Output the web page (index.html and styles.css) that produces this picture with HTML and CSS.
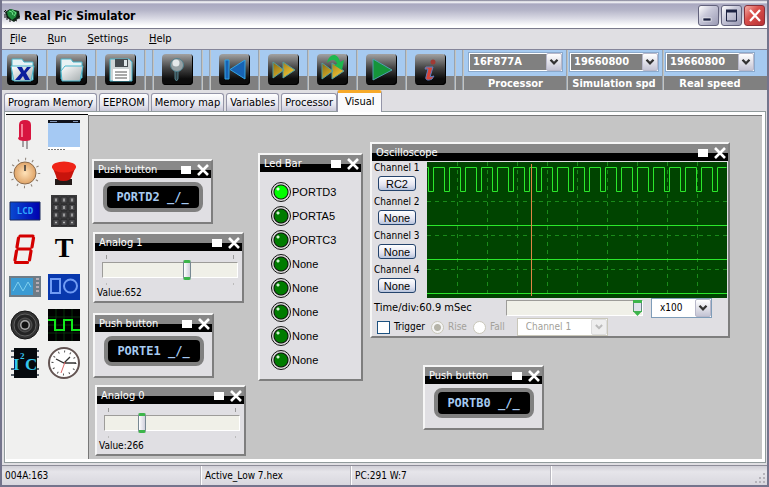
FILE: index.html
```html
<!DOCTYPE html>
<html lang="en">
<head>
    <meta charset="UTF-8">
    <meta name="viewport" content="width=device-width, initial-scale=1.0">
    <title>Real Pic Simulator</title>
    <link rel="stylesheet" href="styles.css">
</head>
<body>
    <!-- shared shapes -->
    <svg class="defs" width="0" height="0" aria-hidden="true">
        <defs>
            <linearGradient id="gold" x1="0" y1="0" x2="1" y2="1">
                <stop offset="0" stop-color="#8a6a10"/><stop offset="1" stop-color="#ffd23c"/>
            </linearGradient>
            <linearGradient id="paper" x1="0" y1="0" x2="1" y2="1">
                <stop offset="0" stop-color="#ffffff"/><stop offset="1" stop-color="#a4acae"/>
            </linearGradient>
            <linearGradient id="lcd"><stop offset="0" stop-color="#0a4ad0"/><stop offset="1" stop-color="#0000b0"/></linearGradient>
            <radialGradient id="knob"><stop offset="0" stop-color="#ffe2b8"/><stop offset="1" stop-color="#dfa468"/></radialGradient>
            <symbol id="chevron" viewBox="0 0 16 18">
                <path d="M4 6.500l4 4 4-4" fill="none" stroke="currentColor" stroke-width="2.600"/>
            </symbol>
            <symbol id="cross" viewBox="0 0 12 12">
                <path d="M1 1l10 10M11 1L1 11" stroke="#fff" stroke-width="2.600"/>
            </symbol>
        </defs>
    </svg>

    <header class="titlebar">
        <svg class="app-icon" width="17" height="17" viewBox="0 0 17 17">
            <path d="M1 5l5-3 9 2 1 6-6 5-7-4z" fill="#102818"/>
            <path d="M3 5l4-3 6 3-1 5-4 3-4-4z" fill="#1f8a3c"/>
            <path d="M5 4l3 1 1 3M8 3l4 3-2 3" stroke="#6fe08a" fill="none"/>
            <path d="M1 7v4M3 9v4M6 12v3M11 13l2 1M15 9v3M2 3L0 5" stroke="#111"/>
        </svg>
        <h1>Real Pic Simulator</h1>
        <div class="window-buttons">
            <button class="win-btn" aria-label="Minimize"><svg width="19" height="19" viewBox="0 0 19 19"><rect x="4" y="12" width="8" height="3" fill="#1c2242" stroke="#fff" stroke-width=".6"/></svg></button>
            <button class="win-btn" aria-label="Maximize"><svg width="19" height="19" viewBox="0 0 19 19"><path d="M4.500 5v10h10V5z" fill="none" stroke="#1c2242"/><path d="M4 5h11" stroke="#1c2242" stroke-width="3"/></svg></button>
            <button class="win-btn close" aria-label="Close"><svg width="19" height="19" viewBox="0 0 19 19"><path d="M5 4l10 11M15 4L5 15" stroke="#fff" stroke-width="2.200"/></svg></button>
        </div>
    </header>

    <nav class="menu">
        <a href="#"><u>F</u>ile</a>
        <a href="#"><u>R</u>un</a>
        <a href="#"><u>S</u>ettings</a>
        <a href="#"><u>H</u>elp</a>
    </nav>

    <div class="toolbar">
        <button class="tool" aria-label="Close project"><svg viewBox="0 0 31 31"><path d="M5 26V5h10l2 3h9v18z" fill="#e8f2f4" stroke="#49b6cc"/><path d="M4 12h23l-3 15H7z" fill="url(#paper)" stroke="#49b6cc"/><path d="M10 13h5l2 4 3-4h4l-5 6 4 7h-5l-2-4-3 4h-5l6-7z" fill="#0a1e9c"/></svg></button>
        <span class="sep"></span>
        <button class="tool" aria-label="Open"><svg viewBox="0 0 31 31"><path d="M5 25V5h10l2 3h9v16z" fill="#e8f2f4" stroke="#49b6cc"/><path d="M6 27l-1-10 4-5h18l-3 15z" fill="url(#paper)" stroke="#49b6cc"/></svg></button>
        <span class="sep"></span>
        <button class="tool" aria-label="Save"><svg viewBox="0 0 31 31"><path d="M5 5h19l3 3v19H5z" fill="#cfd5d6" stroke="#49b6cc"/><path d="M10 5h13v8H10z" fill="#464c50"/><path d="M19 6h3v6h-3z" fill="#dfe6e8"/><path d="M8 15h16v12H8z" fill="#fff"/><path d="M10 18h12M10 21h12M10 24h12" stroke="#555"/></svg></button>
        <span class="sep"></span>
        <span class="sep"></span>
        <button class="tool" aria-label="Find"><svg viewBox="0 0 31 31"><path d="M13 17h3v8l-1.500 2-1.500-2z" fill="#34464c" stroke="#5e98a4" stroke-width=".8"/><circle cx="15" cy="11" r="6.500" fill="#96a0a4" stroke="#50808c"/><circle cx="14" cy="9" r="3.500" fill="#e4e8ea"/></svg></button>
        <span class="sep"></span>
        <span class="sep"></span>
        <button class="tool" aria-label="Reset"><svg viewBox="0 0 31 31"><path d="M6 6h4v19H6zM26 6v19L11 15.500z" fill="#1763b4" stroke="#35a5e4"/></svg></button>
        <span class="sep"></span>
        <button class="tool" aria-label="Step"><svg viewBox="0 0 31 31"><path d="M5 8l11 8-11 8zM15 8l12 8-12 8z" fill="url(#gold)" stroke="#4f9ea0"/></svg></button>
        <span class="sep"></span>
        <button class="tool" aria-label="Step over"><svg viewBox="0 0 31 31"><path d="M5 9l11 8-11 8zM15 9l12 8-12 8z" fill="url(#gold)" stroke="#4f9ea0"/><path d="M10 9C12-1 21-2 23 8l4-2-2 10-8-5 3-1c-1-5-6-5-10-1z" fill="#1eb84e"/></svg></button>
        <span class="sep"></span>
        <button class="tool" aria-label="Run"><svg viewBox="0 0 31 31"><path d="M7 5l19 11L7 26z" fill="#15953a" stroke="#4fa0b0"/></svg></button>
        <span class="sep"></span>
        <button class="tool" aria-label="About"><svg viewBox="0 0 31 31"><circle cx="18" cy="8" r="2.500" fill="#a03a34"/><path d="M11 13h7l-3 10 4-1-2 3c-4 2-7 1-6-2l2-8h-3z" fill="#d84436" stroke="#5f7ec0"/></svg></button>
        <span class="sep"></span>
        <span class="sep"></span>
        <div class="field wide">
            <div class="combo dark">
                <select id="processor"><option>16F877A</option></select>
                <svg class="arrow"><use href="#chevron"/></svg>
            </div>
            <label for="processor">Processor</label>
        </div>
        <span class="sep"></span>
        <div class="field">
            <div class="combo dark">
                <select id="sim-speed"><option>19660800</option></select>
                <svg class="arrow"><use href="#chevron"/></svg>
            </div>
            <label for="sim-speed">Simulation spd</label>
        </div>
        <span class="sep"></span>
        <div class="field">
            <div class="combo dark">
                <select id="real-speed"><option>19660800</option></select>
                <svg class="arrow"><use href="#chevron"/></svg>
            </div>
            <label for="real-speed">Real speed</label>
        </div>
    </div>

    <div class="tabs" role="tablist">
        <button class="tab" role="tab">Program Memory</button>
        <button class="tab" role="tab">EEPROM</button>
        <button class="tab" role="tab">Memory map</button>
        <button class="tab" role="tab">Variables</button>
        <button class="tab" role="tab">Processor</button>
        <button class="tab active" role="tab" aria-selected="true">Visual</button>
    </div>

    <main class="page">
        <aside class="palette">
            <button aria-label="Led"><svg viewBox="0 0 32 32"><path d="M14 20v8M18 20v10" stroke="#8a8488" stroke-width="1.500"/><path d="M10 6q0-5 6-5t6 5v13q1 3-6 3t-7-3l1-1z" fill="#d8153f"/><path d="M13 5v13" stroke="#f47b92" stroke-width="2"/></svg></button>
            <button aria-label="Terminal"><svg viewBox="0 0 32 32"><path d="M0 1h32v30H0z" fill="#fff"/><path d="M0 4h32v24H0z" fill="#a5c9f3"/><path d="M0 1h32v3H0z" fill="#10131c"/><path d="M2 2.500h7M25 2.500h5" stroke="#8295b5"/><path d="M0 30.500h17" stroke="#777" stroke-dasharray="2 1"/></svg></button>
            <button aria-label="Potentiometer"><svg viewBox="0 0 32 32"><circle cx="16" cy="16" r="14" fill="none" stroke="#8a7f75" stroke-width="2.500" stroke-dasharray="1 6.300"/><circle cx="16" cy="16" r="11" fill="url(#knob)" stroke="#8a6a4c"/><path d="M16 8v6" stroke="#333" stroke-width="1.500"/></svg></button>
            <button aria-label="Push button"><svg viewBox="0 0 32 32"><path d="M7 22h17v6H7z" fill="#241a18"/><path d="M4 9h24l-4 10q-1 5-8.500 5T8 19z" fill="#c8140c"/><ellipse cx="16" cy="10" rx="12" ry="5.500" fill="#ef2417"/></svg></button>
            <button aria-label="LCD display"><svg viewBox="0 0 32 32"><path d="M1 7h30v18H1z" fill="url(#lcd)" stroke="#1a2a5c"/><text class="lcd-text" x="16" y="19" text-anchor="middle">LCD</text></svg></button>
            <button aria-label="Keypad"><svg viewBox="0 0 32 32"><path d="M3 0h26v32H3z" fill="#3a3a3c"/><path d="M5 2h6v6H5zM13 2h6v6h-6zM21 2h6v6h-6zM5 9.500h6v6H5zM13 9.500h6v6h-6zM21 9.500h6v6h-6zM5 17h6v6H5zM13 17h6v6h-6zM21 17h6v6h-6zM5 24.500h6v6H5zM13 24.500h6v6h-6zM21 24.500h6v6h-6z" fill="#4b4b4e" stroke="#252527" stroke-width=".7"/><path d="M8 3.500v3M16 3.500v3M24 3.500v3M8 11v3M16 11v3M24 11v3M8 18.500v3M16 18.500v3M24 18.500v3M7 27.500h2M15 27.500h2M23 27.500h2" stroke="#b5b5b5" stroke-width="1.500"/></svg></button>
            <button aria-label="7 segment"><svg viewBox="0 0 32 32"><path d="M11 3h13M24.500 5l-1.500 9M9.500 5L8 14M9 16h12M22 18l-1.500 9M7.500 18L6 27M6.500 29.500h12" fill="none" stroke="#d40000" stroke-width="3.200" stroke-linecap="round"/></svg></button>
            <button aria-label="Text"><svg viewBox="0 0 32 32"><text class="serif-text" x="16" y="24" text-anchor="middle">T</text></svg></button>
            <button aria-label="Oscilloscope"><svg viewBox="0 0 32 32"><path d="M0 5h32v21H0z" fill="#6f7c86"/><path d="M2 7h22v17H2z" fill="#3b9bd3"/><path d="M4 20l5-9 5 9 5-9 3 5" fill="none" stroke="#7fd0ee"/><path d="M27 8h3M27 12h3M27 16h3M27 20h3" stroke="#b7adb5" stroke-width="2"/></svg></button>
            <button aria-label="Graphic LCD"><svg viewBox="0 0 32 32"><path d="M0 3h32v26H0z" fill="#0838ad"/><path d="M3 8h9v14H3z" fill="none" stroke="#719cf4" stroke-width="2"/><circle cx="22.500" cy="15" r="6.500" fill="none" stroke="#719cf4" stroke-width="2"/></svg></button>
            <button aria-label="Speaker"><svg viewBox="0 0 32 32"><circle cx="16" cy="16" r="14" fill="#353535" stroke="#141414"/><circle cx="16" cy="16" r="11" fill="#242424" stroke="#606060"/><circle cx="16" cy="16" r="7" fill="#3a3a3a" stroke="#555"/><circle cx="16" cy="16" r="5" fill="#aaa"/><circle cx="16" cy="16" r="3.500" fill="#111"/></svg></button>
            <button aria-label="Signal"><svg viewBox="0 0 32 32"><path d="M0 0h32v32H0z" fill="#000"/><path d="M8 0v32M16 0v32M24 0v32M0 8h32M0 16h32M0 24h32" stroke="#0a4210" stroke-width=".7"/><path d="M0 11h7v10h9V11h8v10h8" fill="none" stroke="#12e81c" stroke-width="2"/></svg></button>
            <button aria-label="I2C"><svg viewBox="0 0 32 32"><path d="M2 4h28M2 10h28M2 22h28M2 28h28" stroke="#57606a" stroke-width="2"/><path d="M5 1h23v30H5z" fill="#060a0e"/><text class="chip-text" x="4" y="23">I</text><text class="chip-text small" x="11" y="12">2</text><text class="chip-text" x="16" y="23">C</text></svg></button>
            <button aria-label="Clock"><svg viewBox="0 0 32 32"><circle cx="16" cy="16" r="15" fill="#fff" stroke="#635452" stroke-width="2"/><circle cx="16" cy="16" r="11.500" fill="none" stroke="#555" stroke-width="2" stroke-dasharray="1 5"/><path d="M16 16l6-6M8 12l8 4h12" fill="none" stroke="#333" stroke-width="1.300"/><path d="M17 15l-4 11" stroke="#d66"/></svg></button>
        </aside>

        <section class="canvas">
            <div class="panel push push-d2">
                <div class="panel-title"><span>Push button</span><i class="box"></i><button aria-label="Close"><svg><use href="#cross"/></svg></button></div>
                <button class="pin">PORTD2 _/_</button>
            </div>

            <div class="panel analog analog-1">
                <div class="panel-title"><span>Analog 1</span><i class="box"></i><button aria-label="Close"><svg><use href="#cross"/></svg></button></div>
                <div class="slide"><input type="range" id="an1" min="0" max="1023" value="652"></div>
                <label for="an1">Value:652</label>
            </div>

            <div class="panel push push-e1">
                <div class="panel-title"><span>Push button</span><i class="box"></i><button aria-label="Close"><svg><use href="#cross"/></svg></button></div>
                <button class="pin">PORTE1 _/_</button>
            </div>

            <div class="panel analog analog-0">
                <div class="panel-title"><span>Analog 0</span><i class="box"></i><button aria-label="Close"><svg><use href="#cross"/></svg></button></div>
                <div class="slide"><input type="range" id="an0" min="0" max="1023" value="266"></div>
                <label for="an0">Value:266</label>
            </div>

            <div class="panel ledbar">
                <div class="panel-title"><span>Led Bar</span><i class="box"></i><button aria-label="Close"><svg><use href="#cross"/></svg></button></div>
                <ul>
                    <li><i class="led on"></i>PORTD3</li>
                    <li><i class="led"></i>PORTA5</li>
                    <li><i class="led"></i>PORTC3</li>
                    <li><i class="led"></i>None</li>
                    <li><i class="led"></i>None</li>
                    <li><i class="led"></i>None</li>
                    <li><i class="led"></i>None</li>
                    <li><i class="led"></i>None</li>
                </ul>
            </div>

            <div class="panel scope">
                <div class="panel-title"><span>Oscilloscope</span><i class="box"></i><button aria-label="Close"><svg><use href="#cross"/></svg></button></div>
                <div class="scope-main">
                    <div class="channels">
                        <div class="channel"><span>Channel 1</span><button>RC2</button></div>
                        <div class="channel"><span>Channel 2</span><button>None</button></div>
                        <div class="channel"><span>Channel 3</span><button>None</button></div>
                        <div class="channel"><span>Channel 4</span><button>None</button></div>
                    </div>
                    <svg class="plot" viewBox="0 0 300 136">
                        <path d="M0 0h300v136H0z" fill="#004400"/>
                        <g fill="none" stroke="#1a8a1a" stroke-dasharray="4 4">
                            <path d="M30.500 0v136M60.500 0v136M90.500 0v136M120.500 0v136M150.500 0v136M180.500 0v136M210.500 0v136M240.500 0v136M270.500 0v136"/>
                            <path d="M0 39.500h300M0 73.500h300M0 107.500h300"/>
                        </g>
                        <g fill="none" stroke="#2be82b">
                            <path d="M0 5.500h1.500v24h5v-24h11v24h5v-24h11v24h5v-24h11v24h5v-24h11v24h5v-24h11v24h5v-24h11v24h5v-24h7v24h5v-24h11v24h5v-24h11v24h5v-24h11v24h5v-24h11v24h5v-24h11v24h5v-24h11v24h5v-24h11v24h5v-24h11v24h5v-24h11v24h5v-24h11v24h5v-24h11v24h5v-24h9"/>
                            <path d="M0 63.500h300M0 97.500h300M0 131.500h300"/>
                        </g>
                        <path d="M104.500 2v132" stroke="#e08446"/>
                    </svg>
                </div>
                <div class="scope-row">
                    <label for="time-div">Time/div:60.9 mSec</label>
                    <input type="range" id="time-div" class="pointer" min="0" max="100" value="100">
                    <div class="combo scale">
                        <select aria-label="Scale"><option>x100</option></select>
                        <svg class="arrow"><use href="#chevron"/></svg>
                    </div>
                </div>
                <div class="scope-row trigger">
                    <input type="checkbox" id="trigger"><label for="trigger">Trigger</label>
                    <input type="radio" name="edge" id="rise" checked disabled><label class="off" for="rise">Rise</label>
                    <input type="radio" name="edge" id="fall" disabled><label class="off" for="fall">Fall</label>
                    <div class="combo source">
                        <select aria-label="Trigger channel" disabled><option>Channel 1</option></select>
                        <svg class="arrow"><use href="#chevron"/></svg>
                    </div>
                </div>
            </div>

            <div class="panel push push-b0">
                <div class="panel-title"><span>Push button</span><i class="box"></i><button aria-label="Close"><svg><use href="#cross"/></svg></button></div>
                <button class="pin">PORTB0 _/_</button>
            </div>
        </section>
    </main>

    <footer class="status">
        <span class="address">004A:163</span>
        <span class="file">Active_Low 7.hex</span>
        <span class="address">PC:291 W:7</span>
        <svg class="grip" width="12" height="12" viewBox="0 0 12 12"><path d="M9 1h2v2H9zM5 5h2v2H5zM9 5h2v2H9zM1 9h2v2H1zM5 9h2v2H5zM9 9h2v2H9z" fill="#b5b3ba"/></svg>
    </footer>
</body>
</html>
```
FILE: styles.css
```css
* {
    box-sizing: border-box;
}

body {
    display: flex;
    flex-direction: column;
    min-height: 100vh;
    margin: 0;
    border: solid #74748c;
    border-width: 0 2px 2px;
    font-family: "DejaVu Sans Condensed", "DejaVu Sans", sans-serif;
    font-size: 10px;
    line-height: 12px;
    color: #000;
    background-color: #e0dfe3;
}

button, input, select {
    font: inherit;
    color: inherit;
    margin: 0;
    padding: 0;
}

svg {
    display: block;
}

.defs {
    position: absolute;
}

/* title bar */
.titlebar {
    display: flex;
    align-items: center;
    height: 29px;
    padding: 3px 2px 0;
    border-bottom: 1px solid #7b7a8c;
    background: linear-gradient(#74748c 0, #fff 2px, #a9a8c0 4px, #b4b4c8 10px, #dcdce6 19px, #fff 26px);
}

.titlebar h1 {
    flex: 1;
    margin: 0 0 0 3px;
    font-size: 12px;
    line-height: 16px;
}

.window-buttons {
    display: flex;
    gap: 2px;
}

.win-btn {
    width: 21px;
    height: 21px;
    border: 1px solid #62627c;
    border-radius: 3px;
    background: linear-gradient(135deg, #fff, #c9c9da 40%, #9a9ab4);
}

.win-btn.close {
    border-color: #8a3038;
    background: linear-gradient(135deg, #f4b0a8, #d9504c 40%, #b83034);
}

/* menu */
.menu {
    display: flex;
    gap: 21px;
    height: 21px;
    padding: 4px 8px;
    border-bottom: 1px solid #85859a;
    font-size: 11px;
}

.menu a {
    color: #000;
    text-decoration: none;
}

/* toolbar */
.toolbar {
    display: flex;
    height: 40px;
    padding-left: 5px;
    border-left: 1px solid #8c8ca0;
    margin-left: -1px;
    background: linear-gradient(#a6caf0 26px, #808080 26px);
}

.tool {
    width: 31px;
    height: 31px;
    margin: 4px 8px 0;
    border: 0;
    border-radius: 4px;
    background: linear-gradient(#a2a2a2, #444 45%, #0c0c0c 80%);
    box-shadow: inset -1px -1px 0 #000;
}

.tool:first-child {
    margin-left: 0;
}

.sep {
    width: 2px;
    background-color: #c4c4c0;
    border-left: 1px solid #98a4b0;
}

.sep + .sep {
    margin-left: 6px;
}

.field {
    width: 90px;
    margin: 2px 3px 0 1px;
    text-align: center;
    font-size: 11px;
    font-weight: bold;
    color: #fff;
}

.field.wide {
    width: 95px;
    margin-left: 4px;
}

.field label {
    display: block;
    margin-top: 6px;
    white-space: nowrap;
}

.combo {
    position: relative;
    height: 20px;
    border: 1px solid #7f9db9;
    background-color: #fff;
}

.combo select {
    appearance: none;
    display: block;
    width: 100%;
    height: 100%;
    border: 0;
    padding: 0 17px 0 8px;
    background: transparent;
    opacity: 1;
}

.combo .arrow {
    position: absolute;
    right: 0;
    top: 0;
    width: 16px;
    height: 100%;
    color: #333;
    border: 1px solid #b8b8ca;
    border-radius: 2px;
    background: linear-gradient(#fff, #c4c4d4);
    pointer-events: none;
}

.combo.dark {
    border-color: #8aa9cc;
    background-color: #808080;
}

.combo.dark select {
    padding-left: 3px;
    border: 1px solid #fff;
}

/* tabs */
.tabs {
    display: flex;
    align-items: flex-end;
    gap: 2px;
    height: 21px;
    padding: 0 2px;
}

.tab {
    height: 18px;
    padding: 0 3px;
    border: 1px solid #9495a8;
    border-bottom: 0;
    border-radius: 3px 3px 0 0;
    font-size: 11px;
    background: linear-gradient(#fff, #e8e8f0 60%, #c8c8d8);
}

.tab.active {
    height: 22px;
    margin: 0 0 -1px -2px;
    padding: 0 7px 1px;
    border-top: 3px solid #f7a928;
    background: #fbfbfc;
    z-index: 1;
}

/* page */
.page {
    flex: 1;
    display: flex;
    margin: 0 1px 2px 2px;
    padding: 2px 3px 3px 1px;
    border: 1px solid #919b9c;
    background-color: #fff;
}

.palette {
    display: grid;
    grid-template-columns: 32px 32px;
    align-content: start;
    gap: 6px 7px;
    width: 82px;
    padding: 4px 3px;
    border-top: 1px solid #000;
    background-color: #f0f0ef;
}

.palette button {
    width: 32px;
    height: 32px;
    border: 0;
    background: none;
}

.lcd-text {
    font: bold 9px "DejaVu Sans Mono", monospace;
    fill: #31a8ff;
}

.serif-text {
    font: bold 28px "Liberation Serif", serif;
}

.chip-text {
    font: bold 17px "Liberation Serif", serif;
    fill: #35c6ee;
}

.chip-text.small {
    font-size: 9px;
}

.canvas {
    position: relative;
    flex: 1;
    margin-top: 1px;
    border: solid #777;
    border-width: 1px 0 0 1px;
    background-color: #c5c5c5;
}

/* component windows */
.panel {
    position: absolute;
    border: 2px solid #f6f6f6;
    border-right-color: #7e7e7e;
    border-bottom-color: #7e7e7e;
    background-color: #e0dfe3;
}

.push {
    width: 121px;
    height: 65px;
}

.analog {
    width: 151px;
    height: 71px;
}

.push-d2 { left: 3px; top: 43px; }
.analog-1 { left: 4px; top: 116px; }
.push-e1 { left: 4px; top: 197px; }
.analog-0 { left: 6px; top: 269px; }
.ledbar { left: 169px; top: 37px; width: 105px; height: 228px; }
.scope { left: 281px; top: 26px; width: 360px; }
.push-b0 { left: 334px; top: 249px; }

.panel-title {
    display: flex;
    align-items: center;
    gap: 6px;
    height: 17px;
    padding: 0 2px 0 4px;
    font-size: 11px;
    color: #fff;
    background: linear-gradient(#888 9px, #000 9px);
}

.panel-title span {
    flex: 1;
}

.panel-title .box {
    width: 10px;
    height: 8px;
    background-color: #fff;
}

.panel-title button {
    border: 0;
    background: none;
}

.panel-title svg {
    width: 12px;
    height: 12px;
}

.pin {
    display: block;
    width: 100px;
    height: 30px;
    margin: 4px auto 0;
    border: 4px solid #808080;
    border-radius: 8px;
    font: bold 12px "DejaVu Sans Mono", monospace;
    color: #a6caf0;
    background-color: #000;
}

.slide {
    margin: 4px 4px 0 7px;
    padding: 5px 0;
    background:
        linear-gradient(#999, #999) 4px 0 / 1px 4px no-repeat,
        linear-gradient(#999, #999) right 4px top 0 / 1px 4px no-repeat,
        linear-gradient(#bbb, #bbb) 4px 100% / 1px 2px no-repeat,
        linear-gradient(#bbb, #bbb) right 4px bottom 0 / 1px 2px no-repeat;
}

input[type="range"] {
    appearance: none;
    display: block;
    width: 100%;
    height: 20px;
    background: transparent;
}

input[type="range"]::-webkit-slider-runnable-track {
    height: 16px;
    border: 1px solid #fff;
    border-top-color: #9d9c99;
    border-left-color: #9d9c99;
    background-color: #f0f0e8;
}

input[type="range"]::-webkit-slider-thumb {
    appearance: none;
    width: 8px;
    height: 20px;
    margin-top: -3px;
    border: 1px solid #778892;
    border-top: 3px solid #3cb54a;
    border-bottom: 3px solid #3cb54a;
    border-radius: 2px;
    background: linear-gradient(90deg, #fff, #d0d0dc);
}

.analog label {
    display: block;
    margin: 2px 0 0 2px;
}

.ledbar ul {
    margin: 8px 0 0 11px;
    padding: 0;
    list-style: none;
    font: 11px "Liberation Sans", sans-serif;
}

.ledbar li {
    display: flex;
    align-items: center;
    gap: 1px;
    height: 24px;
}

.led {
    width: 20px;
    height: 20px;
    border: 1px solid #111;
    border-radius: 50%;
    background: radial-gradient(circle at 6px 6px, #d0f0d0 1px, transparent 2px), radial-gradient(circle, #007c00 6px, #111 7px, #ddd 8px);
}

.led.on {
    background: radial-gradient(circle at 6px 6px, #e0ffe0 1px, transparent 2px), radial-gradient(circle, #0f0 6px, #111 7px, #ddd 8px);
}

/* oscilloscope */
.scope-main {
    display: flex;
    padding: 1px 1px 0 0;
}

.channels {
    width: 55px;
}

.channel {
    height: 34px;
    padding-left: 2px;
    white-space: nowrap;
}

.channel button {
    display: block;
    width: 38px;
    height: 15px;
    margin: 2px 0 0 4px;
    border: 1px solid #24436c;
    border-radius: 3px;
    font: 11px/12px "Liberation Sans", sans-serif;
    background: linear-gradient(#fff, #e4e4f0 60%, #b8c4dc);
}

.plot {
    flex: 1;
    height: 136px;
}

.scope-row {
    display: flex;
    align-items: center;
    height: 20px;
    padding-left: 2px;
}

.scope-row.trigger {
    height: 18px;
    padding-left: 5px;
}

.scope-row > label[for="time-div"] {
    width: 132px;
    font-size: 11px;
}

.scope-row .pointer {
    width: 137px;
    height: 16px;
}

.scope-row .pointer::-webkit-slider-thumb {
    width: 9px;
    height: 16px;
    margin-top: -1px;
    border: 0;
    border-radius: 0;
    clip-path: polygon(0 0, 100% 0, 100% 70%, 50% 100%, 0 70%);
    background:
        linear-gradient(#3cb54a, #3cb54a) 0 0 / 9px 3px no-repeat,
        linear-gradient(#dfe2ea, #dfe2ea) 1px 3px / 7px 8px no-repeat,
        linear-gradient(#68808a 8px, #3cb54a 12px);
}

.combo.scale {
    width: 61px;
    height: 20px;
    margin-left: 8px;
}

.trigger input {
    appearance: none;
    width: 13px;
    height: 13px;
    margin-right: 4px;
    border: 1px solid #1c5180;
    background-color: #fff;
}

.trigger input[type="radio"] {
    margin-left: 6px;
    border-color: #c9c7ba;
    border-radius: 50%;
}

.trigger input:checked {
    background: radial-gradient(circle, #b5b3a8 3px, #f4f4f4 4px);
}

.off {
    color: #a3a19a;
}

.combo.source {
    width: 91px;
    height: 18px;
    margin-left: 12px;
    border-color: #c9c7ba;
    color: #a3a19a;
}

.combo.source .arrow {
    color: #bbb;
    border-color: #ddd;
    background: #eee;
}

/* status bar */
.status {
    display: flex;
    height: 20px;
    border-top: 1px solid #8d8c98;
    line-height: 19px;
    background: linear-gradient(#cfced6, #e6e5ea 30%, #d8d7de);
}

.status span {
    padding-left: 3px;
    border-right: 1px solid #fff;
    box-shadow: inset -1px 0 0 #b9b8c0;
}

.status .address {
    width: 200px;
}

.status .file {
    width: 150px;
}

.status .grip {
    margin: auto 1px 1px auto;
}
```
